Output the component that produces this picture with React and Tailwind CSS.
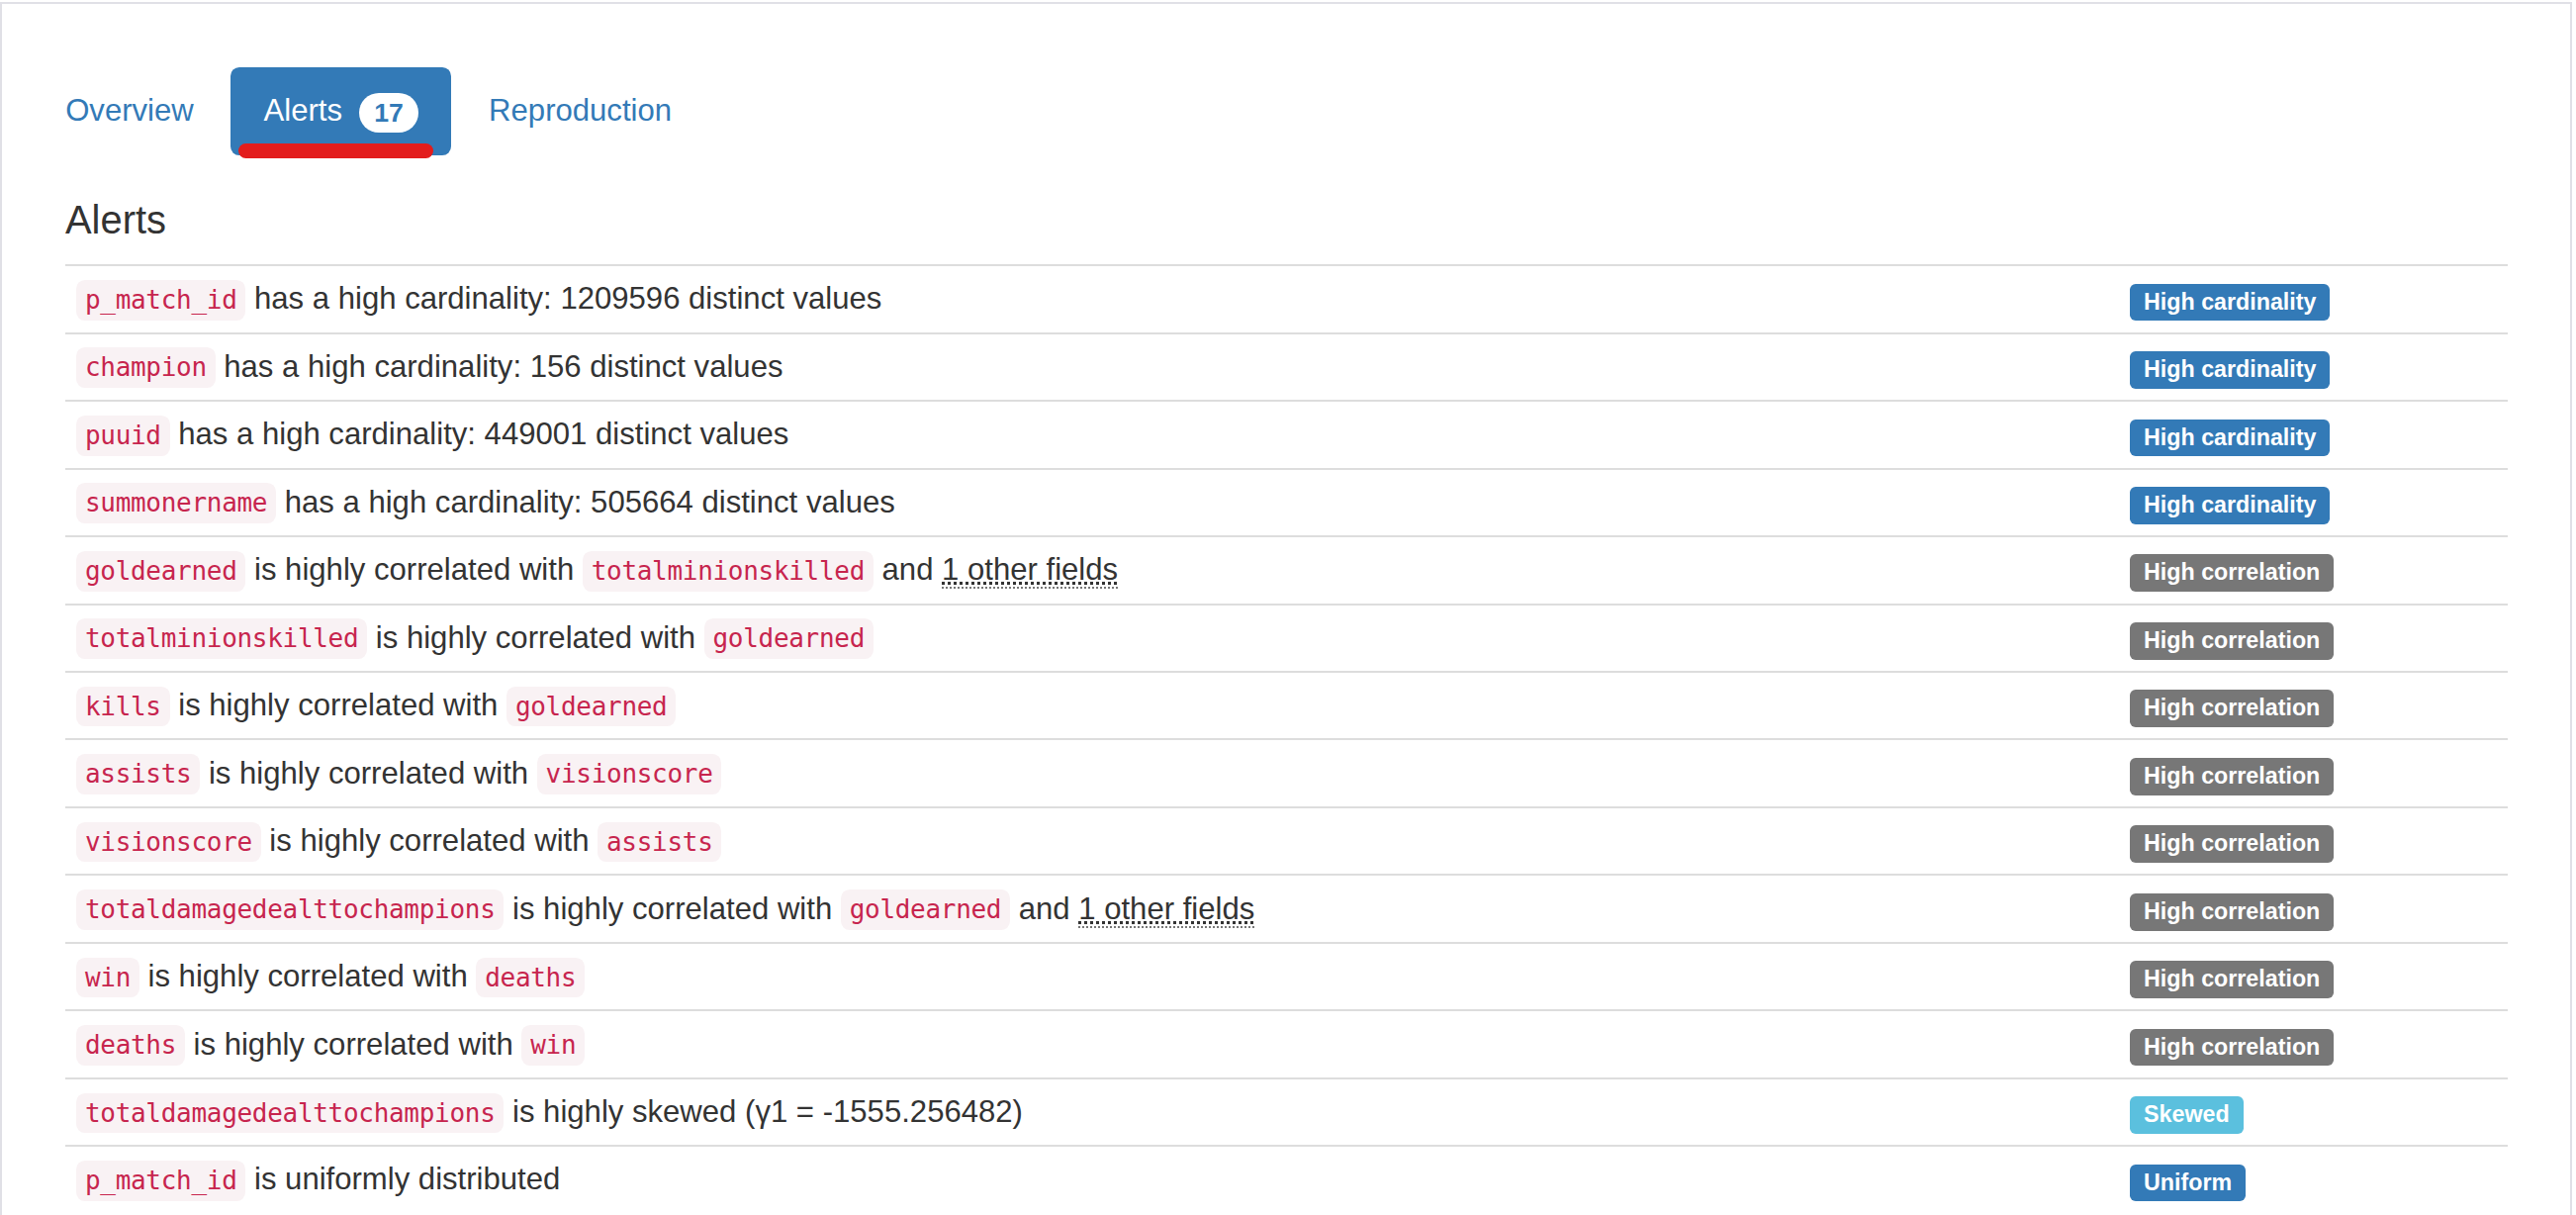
import React from "react";

const rows = [
  { parts: [{ c: "p_match_id" }, " has a high cardinality: 1209596 distinct values"], label: "High cardinality", kind: "primary" },
  { parts: [{ c: "champion" }, " has a high cardinality: 156 distinct values"], label: "High cardinality", kind: "primary" },
  { parts: [{ c: "puuid" }, " has a high cardinality: 449001 distinct values"], label: "High cardinality", kind: "primary" },
  { parts: [{ c: "summonername" }, " has a high cardinality: 505664 distinct values"], label: "High cardinality", kind: "primary" },
  { parts: [{ c: "goldearned" }, " is highly correlated with ", { c: "totalminionskilled" }, " and ", { a: "1 other fields" }], label: "High correlation", kind: "default" },
  { parts: [{ c: "totalminionskilled" }, " is highly correlated with ", { c: "goldearned" }], label: "High correlation", kind: "default" },
  { parts: [{ c: "kills" }, " is highly correlated with ", { c: "goldearned" }], label: "High correlation", kind: "default" },
  { parts: [{ c: "assists" }, " is highly correlated with ", { c: "visionscore" }], label: "High correlation", kind: "default" },
  { parts: [{ c: "visionscore" }, " is highly correlated with ", { c: "assists" }], label: "High correlation", kind: "default" },
  { parts: [{ c: "totaldamagedealttochampions" }, " is highly correlated with ", { c: "goldearned" }, " and ", { a: "1 other fields" }], label: "High correlation", kind: "default" },
  { parts: [{ c: "win" }, " is highly correlated with ", { c: "deaths" }], label: "High correlation", kind: "default" },
  { parts: [{ c: "deaths" }, " is highly correlated with ", { c: "win" }], label: "High correlation", kind: "default" },
  { parts: [{ c: "totaldamagedealttochampions" }, " is highly skewed (γ1 = -1555.256482)"], label: "Skewed", kind: "info" },
  { parts: [{ c: "p_match_id" }, " is uniformly distributed"], label: "Uniform", kind: "primary" },
];

const labelBg = {
  primary: "bg-[#337ab7]",
  default: "bg-[#777777]",
  info: "bg-[#5bc0de]",
};

function Code({ children }) {
  return (
    <code
      className="rounded-[8.9px] bg-[#f9f2f4] px-[8.86px] py-[5.4px] text-[26px] leading-none tracking-[-0.3px] text-[#c7254e]"
      style={{ fontFamily: '"DejaVu Sans Mono", "Liberation Mono", monospace' }}
    >
      {children}
    </code>
  );
}

function Abbr({ children }) {
  return (
    <abbr
      title="Considered correlated fields"
      className="cursor-help border-b-2 border-dotted border-[#777777] underline decoration-dotted"
    >
      {children}
    </abbr>
  );
}

export default function App() {
  return (
    <div
      className="h-[1228px] w-[2604px] overflow-hidden bg-white text-[#333333]"
      style={{ fontFamily: '"Liberation Sans", Arial, sans-serif' }}
    >
      <div className="mt-[2px] h-[1240px] w-[2599.5px] border-2 border-[#e0e0e6] pt-[64px]">
        <ul className="ml-[31px] flex text-[31.1px] leading-[44.3px]">
          <li>
            <a className="block rounded-[8.9px] px-[33.2px] py-[22.15px] text-[#337ab7]">Overview</a>
          </li>
          <li className="ml-[4.43px]">
            <a className="relative block rounded-[8.9px] bg-[#337ab7] px-[33.2px] py-[22.15px] text-white">
              Alerts{" "}
              <span className="ml-[8px] inline-block rounded-[22px] bg-white px-[15.5px] py-[6.65px] align-middle text-[26.6px] font-bold leading-none text-[#337ab7]">
                17
              </span>
              <span className="absolute left-[8px] top-[77px] h-[15px] w-[197px] rounded-full bg-[#e31c1c]" />
            </a>
          </li>
          <li className="ml-[4.43px]">
            <a className="block rounded-[8.9px] px-[33.2px] py-[22.15px] text-[#337ab7]">Reproduction</a>
          </li>
        </ul>

        <div className="pl-[64px]">
          <h4 className="mt-[44px] text-[39.9px] font-normal leading-[43.9px] text-[#333333]">Alerts</h4>
          <div className="mt-[22.6px] w-[2469px] text-[31.1px] leading-[44.3px]">
            {rows.map((r, i) => (
              <div key={i} className="grid grid-cols-[1fr_393px] border-t-[2.2px] border-[#dddddd]">
                <div className="whitespace-nowrap px-[11.1px] py-[11.1px]">
                  {r.parts.map((p, j) =>
                    typeof p === "string" ? (
                      <React.Fragment key={j}>{p}</React.Fragment>
                    ) : p.c ? (
                      <Code key={j}>{p.c}</Code>
                    ) : (
                      <Abbr key={j}>{p.a}</Abbr>
                    )
                  )}
                </div>
                <div className="px-[11.1px] py-[11.1px]">
                  <span
                    className={`${labelBg[r.kind]} rounded-[5.8px] pb-[6.98px] pl-[13.95px] pr-[13.95px] pt-[4.65px] text-[23.25px] font-bold leading-none text-white`}
                  >
                    {r.label}
                  </span>
                </div>
              </div>
            ))}
          </div>
        </div>
      </div>
    </div>
  );
}
